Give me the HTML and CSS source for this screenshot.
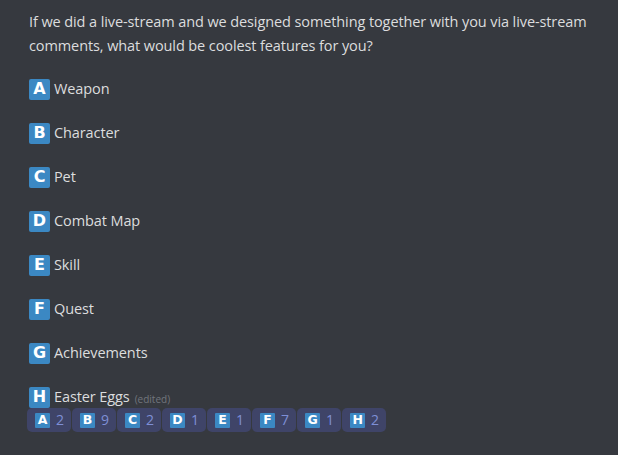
FILE: index.html
```html
<!DOCTYPE html>
<html>
<head>
<meta charset="utf-8">
<link rel="stylesheet" href="styles.css">
</head>
<body>
<div class="message">
  <div class="content">
    <p class="question">If we did a live-stream and we designed something together with you via live-stream comments, what would be coolest features for you?</p>
    <p class="option"><span class="ri">A</span>Weapon</p>
    <p class="option"><span class="ri">B</span>Character</p>
    <p class="option"><span class="ri">C</span>Pet</p>
    <p class="option"><span class="ri">D</span>Combat Map</p>
    <p class="option"><span class="ri">E</span>Skill</p>
    <p class="option"><span class="ri">F</span>Quest</p>
    <p class="option"><span class="ri">G</span>Achievements</p>
    <p class="option last"><span class="ri">H</span>Easter Eggs <span class="edited">(edited)</span></p>
  </div>
  <div class="reactions">
    <div class="reaction"><span class="ri small">A</span><span class="count">2</span></div>
    <div class="reaction"><span class="ri small">B</span><span class="count">9</span></div>
    <div class="reaction"><span class="ri small">C</span><span class="count">2</span></div>
    <div class="reaction"><span class="ri small">D</span><span class="count">1</span></div>
    <div class="reaction"><span class="ri small">E</span><span class="count">1</span></div>
    <div class="reaction"><span class="ri small">F</span><span class="count">7</span></div>
    <div class="reaction"><span class="ri small">G</span><span class="count">1</span></div>
    <div class="reaction"><span class="ri small">H</span><span class="count">2</span></div>
  </div>
</div>
</body>
</html>
```
FILE: styles.css
```css
html, body {
  margin: 0;
  padding: 0;
  background: #36393f;
  height: 100%;
}
.message {
  padding: 10px 20px 0 29px;
  font-family: "Open Sans", "Noto Sans", sans-serif;
  color: #dcddde;
}
.content p {
  margin: 0;
  font-size: 14.5px;
  line-height: 24px;
  letter-spacing: -0.1px;
}
.question {
  padding-bottom: 20px;
}
.option {
  display: flex;
  align-items: center;
  height: 22px;
  margin-bottom: 22px !important;
}
.option.last {
  margin-bottom: 0 !important;
}
.ri {
  display: inline-flex;
  align-items: center;
  justify-content: center;
  width: 21px;
  height: 21px;
  margin-right: 4px;
  background: #3b88c3;
  color: #fff;
  border-radius: 2px;
  font-family: "DejaVu Sans", sans-serif;
  font-weight: bold;
  font-size: 16px;
  line-height: 1;
  letter-spacing: 0;
}
.edited {
  font-size: 10px;
  color: #72767d;
  margin-left: 5px;
  margin-top: 3px;
  letter-spacing: 0;
}
.reactions {
  display: flex;
  gap: 1px;
  margin-left: -2px;
}
.reaction {
  display: flex;
  align-items: center;
  height: 24px;
  padding: 0 7px 0 8px;
  background: #3f4468;
  border-radius: 5px;
  gap: 6px;
}
.ri.small {
  width: 15px;
  height: 15px;
  margin: 0;
  font-size: 12.5px;
  border-radius: 1px;
}
.count {
  font-size: 14px;
  color: #7e8fd6;
  line-height: 1;
}
```
